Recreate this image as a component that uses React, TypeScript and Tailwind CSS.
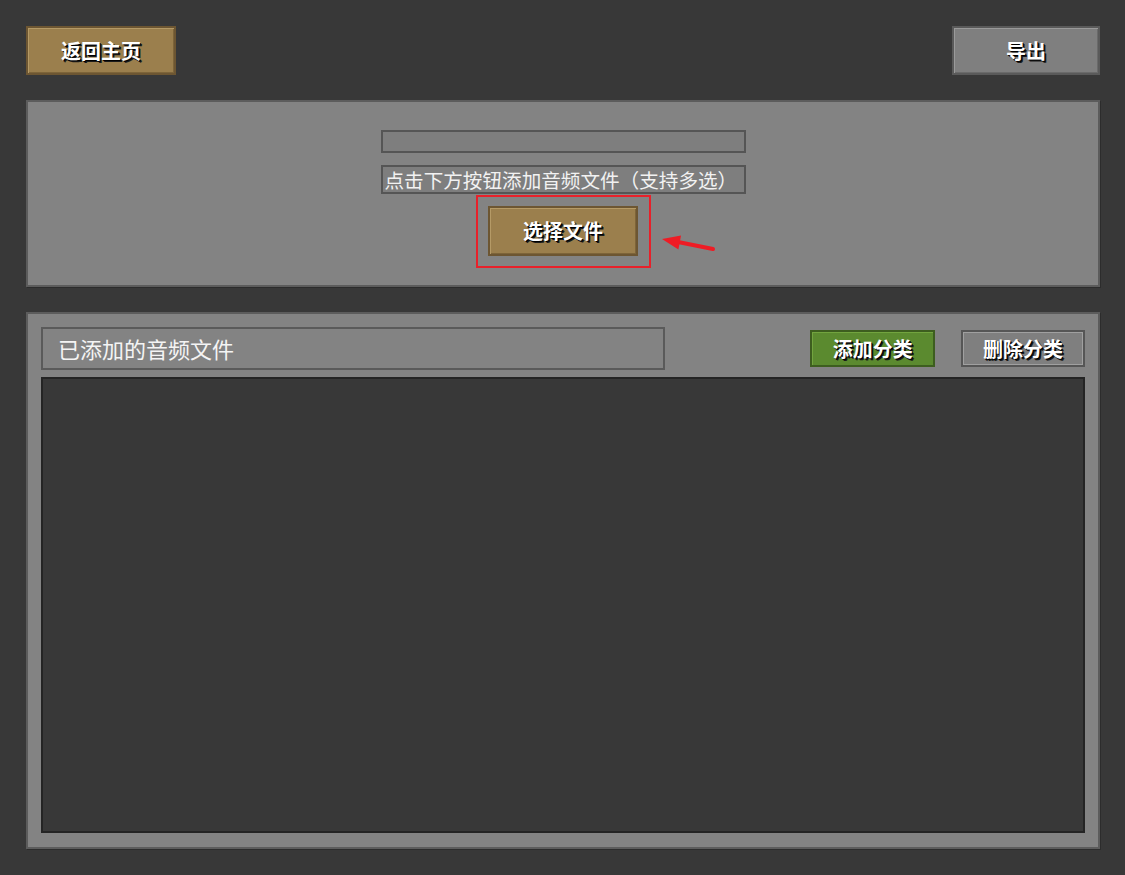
import React from "react";

const btnText =
  "font-bold text-[20px] text-white [text-shadow:1px_1px_0_#000,2px_2px_0_#1a1a1a]";

const App = () => {
  return (
    <div
      className="min-h-[875px] w-full bg-[#383838] pl-[26px] pr-[25px] pt-[26px] pb-[25px]"
      style={{ fontFamily: '"Noto Sans CJK SC", "Noto Sans", sans-serif' }}
    >
      {/* Top bar */}
      <div className="flex justify-between">
        <button
          className={`w-[150px] h-[49px] bg-[#9b7f4d] border-2 border-[#6d5632] shadow-[inset_1px_1px_0_#b59a66,inset_-1px_-1px_0_#7d6439] ${btnText}`}
        >
          返回主页
        </button>
        <button
          className={`w-[148px] h-[49px] bg-[#7f7f7f] border-2 border-[#5a5a5a] shadow-[inset_1px_1px_0_#9a9a9a,inset_-1px_-1px_0_#6a6a6a] ${btnText}`}
        >
          导出
        </button>
      </div>

      {/* File picker panel */}
      <div className="relative mt-[25px] h-[187px] bg-[#838383] border-2 border-[#5c5c5c] shadow-[1px_1px_0_#2c2c2c] flex flex-col items-center pt-[28px]">
        <div className="w-[365px] h-[23px] bg-[#7e7e7e] border-2 border-[#555555]" />
        <div className="mt-[12px] w-[365px] h-[29px] bg-[#7e7e7e] border-2 border-[#555555] flex items-center pl-[2px] text-[19.6px] leading-none text-[#f2f2f2] whitespace-nowrap overflow-hidden">
          点击下方按钮添加音频文件（支持多选）
        </div>
        <button
          className={`mt-[12px] w-[150px] h-[50px] bg-[#9b7f4d] border-2 border-[#6d5632] shadow-[inset_1px_1px_0_#b59a66,inset_-1px_-1px_0_#7d6439] ${btnText}`}
        >
          选择文件
        </button>

        {/* annotation */}
        <div className="absolute left-[448px] top-[93px] w-[175px] h-[73px] border-2 border-[#e8202a] pointer-events-none" />
        <svg
          className="absolute left-[630px] top-[128px] pointer-events-none"
          width="60"
          height="24"
          viewBox="0 0 60 24"
        >
          <line x1="20" y1="12" x2="55" y2="19" stroke="#ee1c25" strokeWidth="4" strokeLinecap="round" />
          <polygon points="4,9 23,5.6 20.4,19.4" fill="#ee1c25" />
        </svg>
      </div>

      {/* Audio list panel */}
      <div className="mt-[25px] h-[537px] bg-[#838383] border-2 border-[#5c5c5c] shadow-[1px_1px_0_#2c2c2c] px-[13px] pt-[13px] pb-[14px] flex flex-col">
        <div className="flex items-start">
          <div className="w-[625px] h-[43px] bg-[#838383] border-2 border-[#5a5a5a] flex items-center pl-[15px] text-[22px] text-[#f4f4f4]">
            已添加的音频文件
          </div>
          <button
            className={`ml-[145px] mt-[3px] w-[125px] h-[37px] bg-[#5b8a2f] border-2 border-[#3d5e1f] shadow-[inset_1px_1px_0_#72a43f] ${btnText}`}
          >
            添加分类
          </button>
          <button
            className={`ml-[26px] mt-[3px] w-[124px] h-[37px] bg-[#7f7f7f] border-2 border-[#565656] shadow-[inset_1px_1px_0_#a0a0a0,inset_-1px_-1px_0_#a0a0a0] ${btnText}`}
          >
            删除分类
          </button>
        </div>
        <div className="mt-[7px] flex-1 bg-[#383838] border-2 border-[#242424]" />
      </div>
    </div>
  );
};

export default App;
